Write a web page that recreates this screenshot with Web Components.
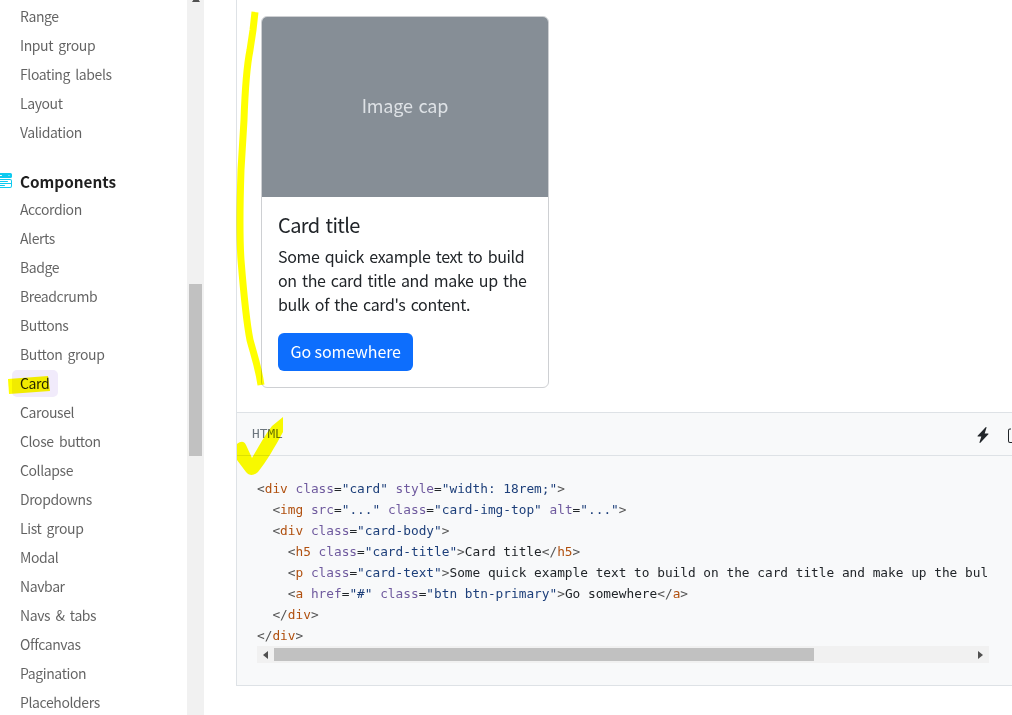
<!DOCTYPE html>
<html lang="en"><head><meta charset="utf-8"><title>Card</title>
<style>
html,body{margin:0;height:100%;overflow:hidden;background:#fff}
body{font-family:"Noto Sans CJK KR","Open Sans","Liberation Sans",sans-serif;color:#212529}
#app{display:flex;width:1012px;height:715px;overflow:hidden;position:relative}
</style></head><body>
<div id="app">
<docs-sidebar></docs-sidebar>
<page-scrollbar></page-scrollbar>
<docs-main>
  <example-card></example-card>
  <code-block></code-block>
</docs-main>
<ink-marks></ink-marks>
</div>
<script>
function el(name, html){
  customElements.define(name, class extends HTMLElement{
    constructor(){super();this.attachShadow({mode:'open'}).innerHTML=html;}
  });
}
const nav1=['Range','Input group','Floating labels','Layout','Validation'];
const nav2=['Accordion','Alerts','Badge','Breadcrumb','Buttons','Button group','Card','Carousel','Close button','Collapse','Dropdowns','List group','Modal','Navbar','Navs &amp; tabs','Offcanvas','Pagination','Placeholders'];
const item=t=>`<a class="${t==='Card'?'on':''}"><span>${t}</span></a>`;
el('docs-sidebar',`<style>
:host{display:flex;flex-direction:column;width:187px;flex:none;padding-top:2px;box-sizing:border-box;overflow:hidden;font-size:14px;letter-spacing:-.4px;word-spacing:2.5px}
a{display:flex;height:29px;align-items:center;padding-left:12px;color:rgba(0,0,0,.62);flex:none}
a span{display:block;padding:0 8px;height:27px;line-height:27px;border-radius:5px}
a.on{color:rgba(0,0,0,.85)}
a.on span{background:#f1ebfb;padding-right:9px}
h3{display:flex;align-items:center;gap:8px;margin:20px 0 0 -4px;height:28px;flex:none;font-size:15.3px;letter-spacing:0;font-weight:600;color:rgba(0,0,0,.88)}
svg{width:16px;height:16px;fill:#0dcaf0;flex:none}
</style>
${nav1.map(item).join('')}
<h3><svg viewBox="0 0 16 16"><path d="M1.5 0A1.5 1.5 0 0 0 0 1.5v2A1.5 1.5 0 0 0 1.5 5h13A1.5 1.5 0 0 0 16 3.5v-2A1.5 1.5 0 0 0 14.5 0h-13zm1 2h3a.5.5 0 0 1 0 1h-3a.5.5 0 0 1 0-1zm9.927.427A.25.25 0 0 1 12.604 2h.792a.25.25 0 0 1 .177.427l-.396.396a.25.25 0 0 1-.354 0l-.396-.396zM0 8a2 2 0 0 1 2-2h12a2 2 0 0 1 2 2v5a2 2 0 0 1-2 2H2a2 2 0 0 1-2-2V8zm1 3v2a1 1 0 0 0 1 1h12a1 1 0 0 0 1-1v-2H1zm14-1V8a1 1 0 0 0-1-1H2a1 1 0 0 0-1 1v2h14zM2 8.5a.5.5 0 0 1 .5-.5h9a.5.5 0 0 1 0 1h-9a.5.5 0 0 1-.5-.5zm0 4a.5.5 0 0 1 .5-.5h6a.5.5 0 0 1 0 1h-6a.5.5 0 0 1-.5-.5z"/></svg>Components</h3>
${nav2.map(item).join('')}`);
el('page-scrollbar',`<style>
:host{display:flex;flex-direction:column;align-items:center;width:17px;flex:none;background:#f1f1f1;overflow:hidden}
.arrow{width:0;height:0;border:4px solid transparent;border-top:0;border-bottom:6px solid #505050;margin-top:-4px;margin-bottom:282px}
.thumb{width:13px;height:172px;background:#c1c1c1;flex:none}
</style><div class="arrow"></div><div class="thumb"></div>`);
el('docs-main',`<style>
:host{display:flex;flex-direction:column;flex:none;width:776px;margin-left:32px;border-left:1px solid #dee2e6;height:686px;box-sizing:border-box;padding-top:16px}
</style><slot></slot>`);
el('example-card',`<style>
:host{display:flex;flex-direction:column;width:288px;height:372px;box-sizing:border-box;margin:0 0 24px 24px;border:1px solid #ced0d3;border-radius:6px;overflow:hidden;flex:none;background:#fff}
.img{height:176px;padding-bottom:4px;flex:none;background:#868e96;color:#dee2e6;display:flex;align-items:center;justify-content:center;font-size:18px;letter-spacing:-.2px;word-spacing:2px}
.body{padding:16px}
h5{margin:0 0 7px;padding-top:0;font-size:20px;line-height:24px;font-weight:400;letter-spacing:-.6px;word-spacing:2px}
p{margin:0 0 17px;font-size:16px;line-height:24px;letter-spacing:-.35px;word-spacing:2px}
a{display:inline-block;height:38px;line-height:36px;box-sizing:border-box;padding:0 12.5px;background:#0d6efd;color:#fff;border-radius:6px;font-size:16px;letter-spacing:-.1px}
</style><div class="img">Image cap</div>
<div class="body"><h5>Card title</h5><p>Some quick example text to build on the card title and make up the bulk of the card's content.</p><a>Go somewhere</a></div>`);
const t=s=>`<i class="p">&lt;</i><i class="t">${s}</i>`;
const a=(n,v)=>` <i class="a">${n}</i>=<i class="s">"${v}"</i>`;
const gt=`<i class="p">&gt;</i>`;
const ct=s=>`<i class="p">&lt;/</i><i class="t">${s}</i>${gt}`;
const code=[
 t('div')+a('class','card')+a('style','width: 18rem;')+gt,
 '  '+t('img')+a('src','...')+a('class','card-img-top')+a('alt','...')+gt,
 '  '+t('div')+a('class','card-body')+gt,
 '    '+t('h5')+a('class','card-title')+gt+'Card title'+ct('h5'),
 '    '+t('p')+a('class','card-text')+gt+"Some quick example text to build on the card title and make up the bulk of the card's content."+ct('p'),
 '    '+t('a')+a('href','#')+a('class','btn btn-primary')+gt+'Go somewhere'+ct('a'),
 '  '+ct('div'),
 ct('div')
].join('\n');
el('code-block',`<style>
:host{display:block;border:solid #dee2e6;border-width:1px 0;background:#f8f9fa;height:274px;box-sizing:border-box;flex:none;font-family:"DejaVu Sans Mono",monospace}
.bar{display:flex;align-items:center;height:40px;padding:2px 0 0 15px;border-bottom:1px solid #dee2e6;box-sizing:content-box;font-size:12.79px;color:#6c757d}
.bar b{font-weight:400;flex:none;width:723px;margin-bottom:3px}
.bar svg{width:16px;height:16px;flex:none;fill:#212529}
.bar .clip{margin-left:16px}
.code{margin:21px 23px 0 20px;width:732px;overflow:hidden}
pre{margin:0;padding-top:1px;box-sizing:border-box;font:12.79px/21px "DejaVu Sans Mono",monospace;color:#212529;height:169px;overflow:hidden}
i{font-style:normal}
.p{color:#555}.t{color:#b0500f}.a{color:#6f5a9e}.s{color:#1d3f7a}
.sb{display:flex;align-items:center;height:17px;background:#f1f1f1;position:relative}
.sb .l,.sb .r{flex:none;width:17px;display:flex;justify-content:center}
.sb .l::before{content:"";border:4px solid transparent;border-left:0;border-right:5px solid #505050}
.sb .r::before{content:"";border:4px solid transparent;border-right:0;border-left:5px solid #505050}
.sb .th{flex:none;width:540px;height:13px;background:#c1c1c1}
.sb .g{flex:1}
</style>
<div class="bar"><b>HTML</b>
<svg viewBox="0 0 16 16"><path d="M11.251.068a.5.5 0 0 1 .227.58L9.677 6.5H13a.5.5 0 0 1 .364.843l-8 8.5a.5.5 0 0 1-.842-.49L6.323 9.5H3a.5.5 0 0 1-.364-.843l8-8.5a.5.5 0 0 1 .615-.09z"/></svg>
<svg class="clip" viewBox="0 0 16 16"><path d="M4 1.5H3a2 2 0 0 0-2 2V14a2 2 0 0 0 2 2h10a2 2 0 0 0 2-2V3.5a2 2 0 0 0-2-2h-1v1h1a1 1 0 0 1 1 1V14a1 1 0 0 1-1 1H3a1 1 0 0 1-1-1V3.5a1 1 0 0 1 1-1h1v-1z"/><path d="M9.5 1a.5.5 0 0 1 .5.5v1a.5.5 0 0 1-.5.5h-3a.5.5 0 0 1-.5-.5v-1a.5.5 0 0 1 .5-.5h3zm-3-1A1.5 1.5 0 0 0 5 1.5v1A1.5 1.5 0 0 0 6.5 4h3A1.5 1.5 0 0 0 11 2.5v-1A1.5 1.5 0 0 0 9.5 0h-3z"/></svg></div>
<div class="code"><pre>${code}</pre>
<div class="sb"><span class="l"></span><span class="th"></span><span class="g"></span><span class="r"></span></div></div>`);
el('ink-marks',`<style>
:host{position:absolute;inset:0;pointer-events:none;mix-blend-mode:multiply;display:block}
svg{position:absolute;left:0;top:0;width:1012px;height:715px}
</style><svg viewBox="0 0 1012 715">
<path d="M255 12 L253 30 L250 50 C246 70 245 90 244 120 L241 170 C240 200 239 230 241 260 C243 285 246 320 250 340 C254 355 258 365 261 385" fill="none" stroke="#ff0" stroke-width="7"/>
<path d="M237 444 C241 441 244 441 246 445 L252 458 C258 448 264 436 272 426 L283 417 L283 432 C275 447 266 462 258 472 C254 476 249 476 246 472 L237 460 Z" fill="#ff0"/>
<path d="M8 379 L48 376 L50 391 L9 394 Z" fill="#ff0"/>
</svg>`);
</script>
</body></html>
